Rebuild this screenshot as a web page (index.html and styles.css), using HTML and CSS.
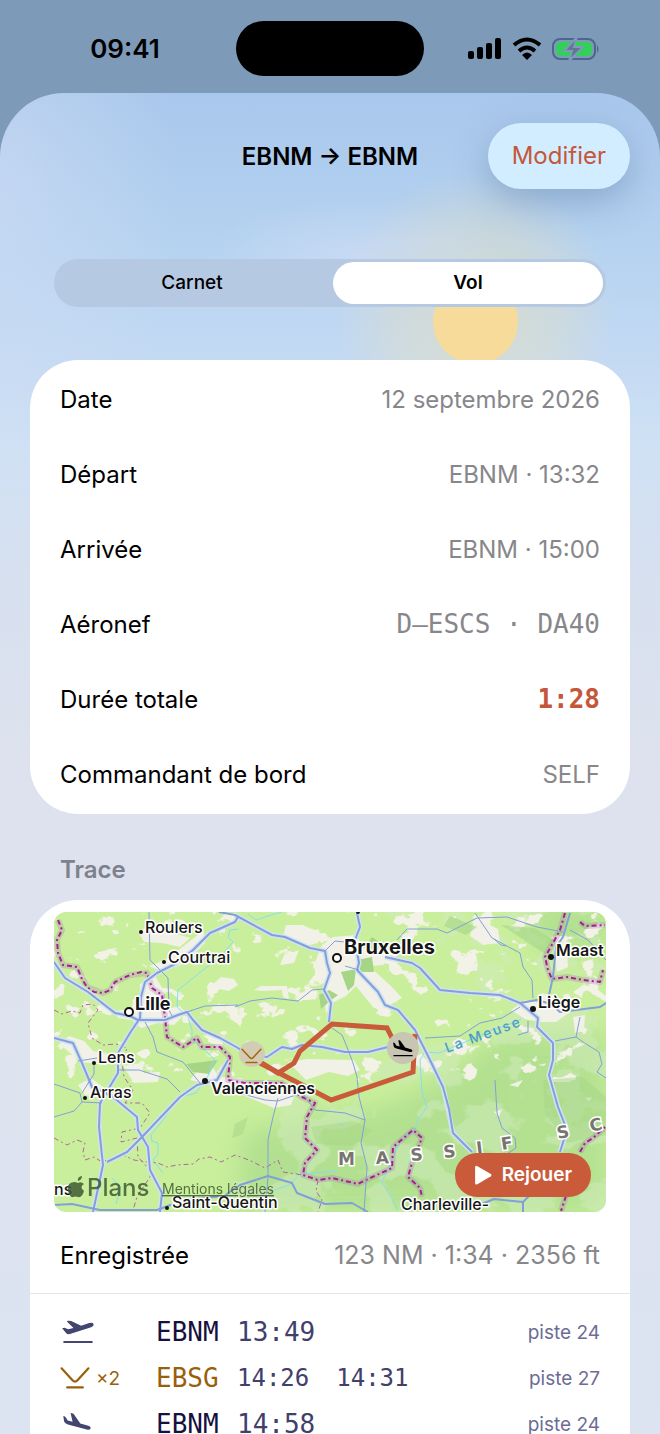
FILE: index.html
```html
<!DOCTYPE html>
<html lang="fr">
<head>
    <meta charset="UTF-8">
    <meta name="viewport" content="width=device-width, initial-scale=1.0">
    <title>EBNM → EBNM</title>
    <link rel="stylesheet" href="styles.css">
</head>
<body>

<!-- Shared icons -->
<svg class="sprite" aria-hidden="true">
    <symbol id="takeoff" viewBox="0 0 105 78">
        <path d="M5 28L12 26L23 31L39 27L20 8Q18 5 23 5L32 6L62 20L86 12Q97 9 99 15Q101 21 92 25L28 45Q21 47 16 41Z" fill="currentColor"/>
        <path d="M11 69H94" stroke="currentColor" stroke-width="6" stroke-linecap="round"/>
    </symbol>
    <symbol id="landing" viewBox="0 0 105 84">
        <path d="M5 18Q6 15 10 18L14 22L19 31L35 35L29 9Q28 5 33 7L38 9L60 40L86 48Q95 51 93 57Q90 62 81 60L20 44Q10 41 8 35Z" fill="currentColor"/>
        <path d="M9 77H92" stroke="currentColor" stroke-width="6" stroke-linecap="round"/>
    </symbol>
    <symbol id="touch" viewBox="0 0 96 72">
        <path d="M5 5L40 43Q48 52 56 43L91 5M23 66H73" fill="none" stroke="currentColor" stroke-width="7" stroke-linecap="round"/>
    </symbol>
</svg>

<div class="status-bar">
    <span class="clock">09:41</span>
    <span class="island"></span>
    <svg class="status-icons" viewBox="0 0 132 26" aria-hidden="true">
        <rect x="0" y="15" width="6" height="8" rx="2"/>
        <rect x="9" y="11" width="6" height="12" rx="2"/>
        <rect x="18" y="7" width="6" height="16" rx="2"/>
        <rect x="27" y="2" width="6" height="21" rx="2"/>
        <g fill="none" stroke="#000" stroke-width="4">
            <path d="M46 9Q59 -2 72 9"/>
            <path d="M51 15Q59 8 67 15"/>
        </g>
        <path d="M54 19Q59 14 64 19L59 24Z"/>
        <rect x="85" y="3" width="42" height="20" rx="7" fill="none" stroke="#4d678c" stroke-width="2"/>
        <path d="M129 9Q132 13 129 17Z" fill="#4d678c"/>
        <rect x="88" y="6" width="36" height="14" rx="5" fill="#32d058"/>
        <path d="M109 1L96 15H104L101 25L115 11H106Z" fill="#5f7790" stroke="#7d9ab9" stroke-width="2"/>
    </svg>
</div>

<main class="sheet">
    <div class="sun"></div>

    <header class="sheet-header">
        <h1>EBNM → EBNM</h1>
        <button class="edit-btn" type="button">Modifier</button>
    </header>

    <div class="tabs" role="tablist">
        <button class="tab" type="button" role="tab" aria-selected="false">Carnet</button>
        <button class="tab active" type="button" role="tab" aria-selected="true">Vol</button>
    </div>

    <dl class="card details">
        <div class="row"><dt>Date</dt><dd>12 septembre 2026</dd></div>
        <div class="row"><dt>Départ</dt><dd>EBNM · 13:32</dd></div>
        <div class="row"><dt>Arrivée</dt><dd>EBNM · 15:00</dd></div>
        <div class="row"><dt>Aéronef</dt><dd class="mono">D–ESCS · DA40</dd></div>
        <div class="row"><dt>Durée totale</dt><dd class="mono total">1:28</dd></div>
        <div class="row"><dt>Commandant de bord</dt><dd>SELF</dd></div>
    </dl>

    <h2>Trace</h2>

    <section class="card trace">
        <div class="map">
            <svg class="map-canvas" viewBox="0 0 552 300" role="img" aria-label="Carte de la trace">
                <defs>
                    <filter id="woods" x="0" y="0" width="100%" height="100%">
                        <feTurbulence type="fractalNoise" baseFrequency="0.022 0.03" numOctaves="4" seed="8"/>
                        <feColorMatrix values="0 0 0 0 .63  0 0 0 0 .83  0 0 0 0 .50  14 0 0 0 -7"/>
                        <feComposite in2="SourceGraphic" operator="in"/>
                    </filter>
                    <filter id="urban" x="0" y="0" width="100%" height="100%" color-interpolation-filters="sRGB">
                        <feTurbulence type="fractalNoise" baseFrequency="0.04 0.055" numOctaves="4" seed="21"/>
                        <feColorMatrix values="0 0 0 0 .95  0 0 0 0 .95  0 0 0 0 .90  0 20 0 0 -12.500"/>
                        <feComposite in2="SourceGraphic" operator="in"/>
                    </filter>
                    <filter id="soft"><feGaussianBlur stdDeviation="12"/></filter>
                </defs>

                <rect width="552" height="300" fill="#c9ef9c"/>
                <g fill="#abdc8c" filter="url(#soft)" opacity=".75">
                    <path d="M250 205L330 195L400 160L450 120L552 120V300H180L190 220Z"/>
                    <path d="M470 -10H552V40H490Z"/>
                </g>
                <path d="M250 0H552V300H170L200 200L330 150L450 110L400 40Z" fill="#000" filter="url(#woods)" opacity=".55"/>
                <rect width="552" height="170" fill="#000" filter="url(#urban)"/>

                <!-- Built-up areas -->
                <g fill="#f1f1e7">
                    <path d="M84 19L101 12L116 20L136 26L126 35L108 31L90 30Z"/>
                    <path d="M95 54L111 48L122 40L145 22L151 31L131 51L109 60Z"/>
                    <path d="M86 72L101 64L110 79L108 98L126 94L132 101L120 113L104 111L87 116L78 108L64 106L61 99L76 97L86 84Z"/>
                    <path d="M5 132L15 124L30 129L39 139L60 143L52 153L27 150Z"/>
                    <path d="M159 72L167 65L180 67L184 73L175 79L160 76Z"/>
                    <path d="M24 173L37 166L53 178L47 186L31 183Z"/>
                    <path d="M69 154L87 151L90 161L106 160L104 170L80 171Z"/>
                    <path d="M136 168L145 157L158 154L165 165L187 166L206 180L229 179L244 174L237 193L220 196L196 186L170 176Z"/>
                    <path d="M234 150L253 147L300 148L306 158L294 164L275 160L252 168Z"/>
                    <path d="M267 34L279 25L302 23L310 36L323 35L339 45L329 53L315 54L337 74L348 86L326 99L319 95L302 74L292 84L278 91L272 102L269 68L260 53Z"/>
                    <path d="M232 13L249 13L268 22L264 31L247 35L229 24Z"/>
                    <path d="M230 43L245 38L240 51L226 53Z"/>
                    <path d="M200 78L207 74L233 74L235 87L229 85L228 78L209 79Z"/>
                    <path d="M345 23L364 18L358 29Z"/>
                    <path d="M421 5L444 17L446 31L429 33L416 24Z"/>
                    <path d="M415 54L424 50L423 59L414 58Z"/>
                    <path d="M457 98L471 88L485 91L488 81L500 84L507 95L519 98L502 110L485 110L471 107Z"/>
                    <path d="M500 35L513 38L514 55L503 60Z"/>
                    <path d="M519 80L531 72L528 86ZM519 105L531 103L530 119L521 121Z"/>
                    <path d="M440 200L448 197L445 205ZM455 173L469 168L464 175ZM531 186L538 185L535 190Z"/>
                </g>
                <!-- Forests -->
                <g fill="#a5d585">
                    <path d="M287 60L302 57L300 73L294 79ZM303 48L318 45L320 60L305 60ZM318 25L328 32L321 40L312 33Z"/>
                    <path d="M265 83L275 78L284 83L276 89L267 97Z"/>
                    <path d="M132 152L164 148L155 162L139 160Z"/>
                    <path d="M396 4L423 15L412 23L390 14Z" opacity=".6"/>
                    <path d="M447 13L480 16L500 28L491 42L470 28Z" opacity=".6"/>
                    <path d="M257 215L300 209L319 219L298 234L262 232Z" opacity=".4"/>
                    <path d="M489 168L528 165L552 185V223L513 231L491 201Z" opacity=".5"/>
                    <path d="M181 212L194 205L189 222L178 226Z" opacity=".5"/>
                </g>

                <!-- Waterways -->
                <g class="river">
                    <path d="M184 17L176 18L174 25L179 30L168 43L124 78L123 95L134 105L138 118L138 128L152 139L163 150"/>
                    <path d="M194 2L202 8L214 4L228 0"/>
                    <path d="M160 148L154 164L142 181L126 185L109 208L97 223L98 229L104 231L104 242L99 248L109 261"/>
                    <path d="M58 266L67 275L62 292"/>
                    <path d="M467 107L451 114L438 118L409 131L385 141L371 140L366 148L368 180L373 195L365 206L359 221L348 226L341 241L328 270L336 283L344 298"/>
                    <path d="M218 279L235 273L246 262L283 259M285 211L290 214"/>
                </g>

                <!-- Borders -->
                <g class="border-glow">
                    <path d="M4 8L8 18L3 28L4 41L9 53L23 55L33 75L49 81L56 78L61 70L76 63L93 61L98 76L108 83L111 105L113 125L129 135L143 126L148 135L166 135L176 145L174 168L191 171L228 171L248 185L261 191L253 205L251 226L263 238L251 251L249 263L264 268L278 266L304 272L314 267L338 256L339 235L359 218L368 226L358 251L354 265L366 276L368 285"/>
                    <path d="M511 1L506 18L499 31L491 45L494 58L498 67L513 65L529 68L546 70L549 58M526 10L531 14L551 13M526 240L531 231L539 226L551 215M512 284L507 299"/>
                </g>
                <g class="border">
                    <path d="M4 8L8 18L3 28L4 41L9 53L23 55L28 67L33 75L40 80L49 81L56 78L61 70L76 63L87 60L93 61L98 76L108 83L111 105L113 125L129 135L143 126L148 135L166 135L176 145L174 168L191 171L228 171L248 185L261 191L253 205L251 226L263 238L251 251L249 263L264 268L278 266L304 272L314 267L338 256L339 235L359 218L368 226L358 251L354 265L366 276L368 285"/>
                    <path d="M511 1L506 18L499 31L491 45L494 58L498 67L513 65L529 68L546 70L549 58M526 10L531 14L551 13M526 240L531 231L539 226L551 215M512 284L507 299"/>
                </g>
                <g class="border thin">
                    <path d="M0 98L8 102L18 99L26 101L29 93L39 92L44 98L34 111L38 126L49 133L62 132L73 136L68 150L70 165L79 178L71 191L88 191L96 201L86 216L68 220L67 230L83 226L84 245L96 258L96 265L86 280L83 285L79 298"/>
                    <path d="M0 226L13 233L23 228L31 231L29 240L31 248L40 245L48 250L60 245L69 243L80 248L93 250L104 251L113 255L123 253L139 252L145 247L156 245L167 250L181 243L195 248L211 256L224 248L229 260L249 263"/>
                    <path d="M264 268L262 279L268 288L264 300"/>
                </g>

                <!-- Roads: pale casing below, blue line above -->
                <g class="road-case">
                    <path d="M0 50L11 66L34 80L61 101L76 104L84 108L111 108L124 103L133 100L139 108L148 118L166 126L184 136L194 143L213 145L228 135L238 137L248 133L268 135L291 140L314 140L334 135"/>
                    <path d="M184 5L181 10L156 21L139 38L123 51L103 61L91 70L87 85L86 106L76 121L64 141L64 161L46 191L45 215L49 253L39 300"/>
                    <path d="M0 126L19 131L28 151L38 175L59 185L83 205L84 218L94 235L96 258L108 281L106 300"/>
                    <path d="M174 148L163 168L143 173L126 185L106 206L88 225L73 240L53 250"/>
                    <path d="M181 3L218 23L231 25L256 36L271 39L273 51L276 61L270 78L277 91L275 110"/>
                    <path d="M303 1L306 15L301 28L305 51L303 58L324 80L331 93L344 98L361 118L376 148L389 175L399 221L418 240"/>
                    <path d="M331 45L358 51L366 56L386 78L416 81L446 83L466 91L484 106L483 115L499 131L499 148L495 163L504 195L513 218L506 240"/>
                </g>
                <g class="road">
                    <path d="M0 50L11 66L34 80L61 101L76 104L84 108L111 108L124 103L133 100L139 108L148 118L166 126L184 136L194 143L213 145L228 135L238 137L248 133L268 135L291 140L314 140L334 135L354 130"/>
                    <path d="M184 5L181 10L156 21L139 38L123 51L103 61L91 70L87 85L86 106L76 121L64 141L64 161L46 191L45 215L49 253L39 300"/>
                    <path d="M0 126L19 131L28 151L38 175L59 185L83 205L84 218L94 235L96 258L108 281L106 300"/>
                    <path d="M174 148L163 168L143 173L126 185L106 206L88 225L73 240L53 250"/>
                    <path d="M165 0L181 3L218 23L231 25L256 36L271 39L273 51L276 61L270 78L277 91L275 110"/>
                    <path d="M303 1L306 15L301 28L305 51L303 58L324 80L331 93L344 98L361 118L376 148L389 175L395 197L399 221L418 240"/>
                    <path d="M331 45L358 51L366 56L386 78L416 81L446 83L466 91L484 106L483 115L499 131L499 148L495 163L504 195L513 218L506 240"/>
                    <path d="M466 91L483 88L497 92L506 100L546 95L552 91"/>
                    <path d="M516 1L509 25L502 35L499 65L495 83"/>
                    <path d="M0 293L18 292L46 298L103 298L130 288L170 284L186 273L214 264L238 271L243 281L271 292L298 291L314 300"/>
                    <path d="M418 296L440 287L469 290L475 284M469 290V300"/>
                </g>
                <g class="road minor">
                    <path d="M95 0L96 48L106 58L114 66L115 98L118 104M91 110L99 125L103 140L129 150L146 171"/>
                    <path d="M133 100L151 94L184 93M271 39L281 29L291 30M291 54L305 58"/>
                    <path d="M181 95L196 89L218 86L244 89L258 78L270 77"/>
                    <path d="M278 116L288 123L293 135L299 151L303 165L305 185L311 208L307 231L313 255L310 300"/>
                    <path d="M181 180L211 188L224 189L248 181L261 198L291 201L311 208M224 186L219 205L214 228L214 265L211 300"/>
                    <path d="M366 17L383 17L393 21L423 6L453 5L483 15L509 20M516 18L534 28L552 48"/>
                    <path d="M421 1L438 26L466 41L469 55L478 68L479 86"/>
                    <path d="M371 126L406 124L426 111L448 106L466 95M343 28L353 17L366 17"/>
                    <path d="M501 129L522 125L526 105M522 125L529 130L545 140L548 152L543 160L552 166"/>
                    <path d="M441 168L443 201L448 216L461 226L462 236L450 244"/>
                    <path d="M0 172L26 181L28 190L20 199L0 205M28 190L48 191M64 158L85 158L113 167L126 180M28 181L40 162L40 152M24 149L43 146"/>
                    <path d="M474 109V120L464 123M440 27L447 33L452 34"/>
                </g>

                <!-- Flight track -->
                <path class="track" d="M206 150L224 161L240 151L246 139L278 112L333 116L344 138M361 122L359 160L277 188L204 150"/>
                <circle cx="198" cy="142" r="13" fill="#d3ccb4"/>
                <use href="#touch" x="187" y="136" width="21" height="16" color="#a5670c"/>
                <circle cx="349" cy="136" r="16" fill="#c9c5b4"/>
                <use href="#landing" x="338" y="126" width="23" height="20" color="#000"/>

                <!-- Place names -->
                <g class="dot">
                    <circle cx="87" cy="20" r="2"/>
                    <circle cx="110" cy="50" r="2"/>
                    <circle cx="40" cy="151" r="2"/>
                    <circle cx="31" cy="186" r="2"/>
                    <circle cx="151" cy="169" r="3"/>
                    <circle cx="497" cy="45" r="3"/>
                    <circle cx="479" cy="97" r="3"/>
                    <circle cx="113" cy="296" r="2"/>
                    <circle cx="304" cy="0" r="2"/>
                </g>
                <circle class="ring" cx="75" cy="100" r="4"/>
                <circle class="ring" cx="283" cy="46" r="4"/>
                <g class="place">
                    <text x="91" y="21">Roulers</text>
                    <text x="114" y="51">Courtrai</text>
                    <text x="44" y="151">Lens</text>
                    <text x="36" y="186">Arras</text>
                    <text x="157" y="182" class="mid">Valenciennes</text>
                    <text x="502" y="44" class="mid">Maast</text>
                    <text x="484" y="96" class="mid">Liège</text>
                    <text x="118" y="296">Saint-Quentin</text>
                    <text x="347" y="298">Charleville-</text>
                    <text x="0" y="283">ns</text>
                    <text x="81" y="98" class="big">Lille</text>
                    <text x="290" y="42" class="capital">Bruxelles</text>
                </g>
                <text class="water-name" transform="translate(393 141) rotate(-20)">La Meuse</text>
                <g class="region">
                    <text transform="translate(284 253)">M</text>
                    <text transform="translate(322 252) rotate(-3)">A</text>
                    <text transform="translate(357 249) rotate(-5)">S</text>
                    <text transform="translate(390 246) rotate(-6)">S</text>
                    <text transform="translate(423 242) rotate(-7)">I</text>
                    <text transform="translate(448 238) rotate(-9)">F</text>
                    <text transform="translate(504 227) rotate(-11)">S</text>
                    <text transform="translate(537 220) rotate(-13)">C</text>
                </g>

                <!-- Map attribution -->
                <g class="attribution">
                    <path d="M24 269Q23 265 28 264Q28 268 24 269ZM20 270Q22 270 24 271Q27 269 30 272Q25 275 30 279Q28 286 24 285Q22 284 19 285Q16 286 14 279Q12 271 20 270Z"/>
                    <text x="33" y="284" class="brand">Plans</text>
                    <text x="108" y="282" class="legal">Mentions légales</text>
                </g>
            </svg>
            <button class="replay-btn" type="button">
                <svg viewBox="0 0 16 18" aria-hidden="true"><path d="M1 2Q1 0 3 1L15 8Q16 9 15 10L3 17Q1 18 1 16Z" fill="#fff"/></svg>
                Rejouer
            </button>
        </div>

        <div class="row summary"><span>Enregistrée</span><span class="value">123 NM · 1:34 · 2356 ft</span></div>

        <table class="legs">
            <tr>
                <td class="leg-icon"><div><svg class="plane" role="img" aria-label="Décollage"><use href="#takeoff"/></svg></div></td>
                <td class="code">EBNM</td>
                <td class="time">13:49</td>
                <td class="runway">piste 24</td>
            </tr>
            <tr class="touch-and-go">
                <td class="leg-icon"><div><svg class="touch" role="img" aria-label="Toucher"><use href="#touch"/></svg><span>×2</span></div></td>
                <td class="code">EBSG</td>
                <td class="time"><span>14:26</span><span>14:31</span></td>
                <td class="runway">piste 27</td>
            </tr>
            <tr>
                <td class="leg-icon"><div><svg class="plane" role="img" aria-label="Atterrissage"><use href="#landing"/></svg></div></td>
                <td class="code">EBNM</td>
                <td class="time">14:58</td>
                <td class="runway">piste 24</td>
            </tr>
        </table>
    </section>
</main>

</body>
</html>
```
FILE: styles.css
```css
/* General page styling */
* {
    box-sizing: border-box;
}

body {
    font-family: Inter, "Liberation Sans", sans-serif;
    font-size: 24px;
    margin: 0;
    height: 100vh;
    overflow: hidden;
    display: flex;
    flex-direction: column;
    background-color: #7d9ab9;
    color: #000;
}

button {
    font-family: inherit;
    border: none;
    cursor: pointer;
}

.sprite {
    display: none;
}

.mono,
.code,
.time {
    font-family: "DejaVu Sans Mono", "Liberation Mono", monospace;
}

/* Status bar */
.status-bar {
    display: grid;
    grid-template-columns: 1fr 188px 1fr;
    align-items: center;
    flex-shrink: 0;
    padding: 21px 0 17px;
}

.clock {
    justify-self: center;
    padding-left: 14px;
    font-size: 26px;
    font-weight: 600;
}

.island {
    height: 55px;
    border-radius: 28px;
    background-color: #000;
}

.status-icons {
    width: 132px;
    justify-self: center;
    margin-right: 16px;
}

/* Sheet */
.sheet {
    position: relative;
    flex: 1;
    min-height: 0;
    overflow: hidden;
    padding: 30px 30px 0;
    border-radius: 64px 64px 0 0;
    background:
        radial-gradient(ellipse 150px 60px at 54% 165px, rgba(210, 222, 245, 0.6), transparent),
        radial-gradient(circle 140px at 72% 219px, rgba(230, 222, 185, 0.6), rgba(225, 222, 195, 0.4) 60%, transparent),
        radial-gradient(ellipse 180px 340px at 0 100px, rgba(210, 222, 244, 0.55), transparent),
        linear-gradient(#a8c7ec, #b5d2f0 150px, #c4daf3 270px, #cfe1f4 350px, #d5e0f0 450px, #dce1ee 620px, #dee2ee 750px, #dce4f1 1341px);
}

.sun {
    position: absolute;
    top: 186px;
    left: 72%;
    width: 85px;
    height: 85px;
    margin-left: -42px;
    border-radius: 50%;
    background-color: #f7db9b;
}

.sheet-header {
    display: grid;
    grid-template-columns: 1fr auto 1fr;
    align-items: center;
}

.sheet-header h1 {
    grid-column: 2;
    margin: 0;
    font-size: 24px;
    font-weight: 600;
}

.edit-btn {
    justify-self: end;
    padding: 0 24px;
    font-size: 24px;
    line-height: 66px;
    color: #c4573a;
    background-color: #d2edff;
    border-radius: 33px;
    box-shadow: 0 12px 36px rgba(70, 100, 140, 0.35);
}

.tabs {
    position: relative;
    display: flex;
    gap: 6px;
    margin: 70px 24px 0;
    padding: 3px;
    border-radius: 24px;
    background-color: #b5c9e2;
}

.tab {
    flex: 1;
    padding: 0;
    font-size: 19px;
    line-height: 42px;
    font-weight: 500;
    border-radius: 21px;
    background: none;
    color: #000;
}

.tab.active {
    font-weight: 600;
    background-color: #fff;
}

/* Cards */
.card {
    position: relative;
    background-color: #fff;
    border-radius: 48px;
}

.details {
    margin: 53px 0 0;
    padding: 2px 0;
}

.row {
    display: flex;
    justify-content: space-between;
    padding: 22px 30px;
    line-height: 31px;
}

.row dd {
    margin: 0;
}

.row dd,
.row .value {
    color: #87878b;
}

.row .mono {
    font-size: 26px;
}

.row .total {
    color: #c4573a;
    font-weight: bold;
}

h2 {
    margin: 40px 30px 14px;
    font-size: 24px;
    font-weight: 600;
    line-height: 32px;
    color: #7d818c;
}

/* Map */
.trace {
    padding: 12px 0 60px;
}

.map {
    position: relative;
    margin: 0 24px;
}

.map-canvas {
    display: block;
    width: 100%;
    border-radius: 12px;
}

.road,
.road-case,
.river,
.border,
.border-glow,
.track {
    fill: none;
    stroke-linejoin: round;
}

.road {
    stroke: #829fdb;
    stroke-width: 2;
}

.road.minor {
    stroke-width: 1;
}

.road-case {
    stroke: #d3e2ef;
    stroke-width: 5;
}

.river {
    stroke: #86def0;
    stroke-width: 1;
}

.border-glow {
    stroke: #a57bab;
    stroke-width: 6;
    opacity: 0.3;
}

.border {
    stroke: #a91c96;
    stroke-width: 2;
    stroke-dasharray: 5 3 2 3;
}

.border.thin {
    stroke: #b065a0;
    stroke-width: 1;
}

.track {
    stroke: #c95b3b;
    stroke-width: 5;
    stroke-linejoin: miter;
}

.dot {
    fill: #111;
}

.ring {
    fill: #fff;
    stroke: #111;
    stroke-width: 2;
}

.place {
    font-size: 16px;
    font-weight: 500;
    fill: #151515;
    stroke: #fff;
    stroke-width: 3px;
    stroke-linejoin: round;
    paint-order: stroke;
}

.place .mid {
    font-weight: 600;
}

.place .big {
    font-size: 18px;
    font-weight: 700;
}

.place .capital {
    font-size: 20px;
    font-weight: 700;
}

.water-name {
    font-size: 14px;
    font-weight: 500;
    letter-spacing: 2px;
    fill: #4b9cc6;
}

.region {
    font-family: "DejaVu Sans", sans-serif;
    font-size: 17px;
    font-weight: 700;
    fill: #77756e;
    stroke: #fff;
    stroke-width: 3px;
    paint-order: stroke;
}

.attribution {
    fill: #3f5a32;
    opacity: 0.85;
}

.attribution .brand {
    font-size: 24px;
    font-weight: 500;
}

.attribution .legal {
    font-size: 14px;
    text-decoration: underline;
}

.replay-btn {
    position: absolute;
    right: 15px;
    bottom: 15px;
    display: flex;
    align-items: center;
    gap: 10px;
    padding: 0 19px;
    font-size: 19px;
    font-weight: 600;
    line-height: 44px;
    color: #fff;
    background-color: #c95b3b;
    border-radius: 22px;
}

.replay-btn svg {
    width: 18px;
}

.summary {
    padding: 28px 30px 22px;
    border-bottom: 1px solid #e6e6ea;
}

.summary .value {
    font-size: 25px;
}

/* Flight legs */
.legs {
    width: 100%;
    margin-top: 15px;
    padding: 0 30px;
    border-spacing: 0;
    table-layout: fixed;
}

.legs td {
    height: 46px;
    padding: 0;
    white-space: nowrap;
}

.leg-icon {
    width: 96px;
    color: #41456f;
}

.leg-icon div {
    display: flex;
    align-items: center;
    gap: 6px;
}

.leg-icon .plane {
    width: 36px;
    height: 26px;
}

.leg-icon .touch {
    width: 30px;
    height: 24px;
}

.leg-icon span {
    font-size: 19px;
}

.code {
    width: 81px;
    font-size: 26px;
    color: #16123f;
}

.time {
    font-size: 26px;
    color: #41406b;
}

.touch-and-go .time {
    font-size: 24px;
}

.time span + span {
    margin-left: 27px;
}

.touch-and-go .leg-icon,
.touch-and-go .code {
    color: #9a5f0a;
}

.runway {
    width: 90px;
    font-size: 19px;
    text-align: right;
    color: #6c6c95;
}
```
